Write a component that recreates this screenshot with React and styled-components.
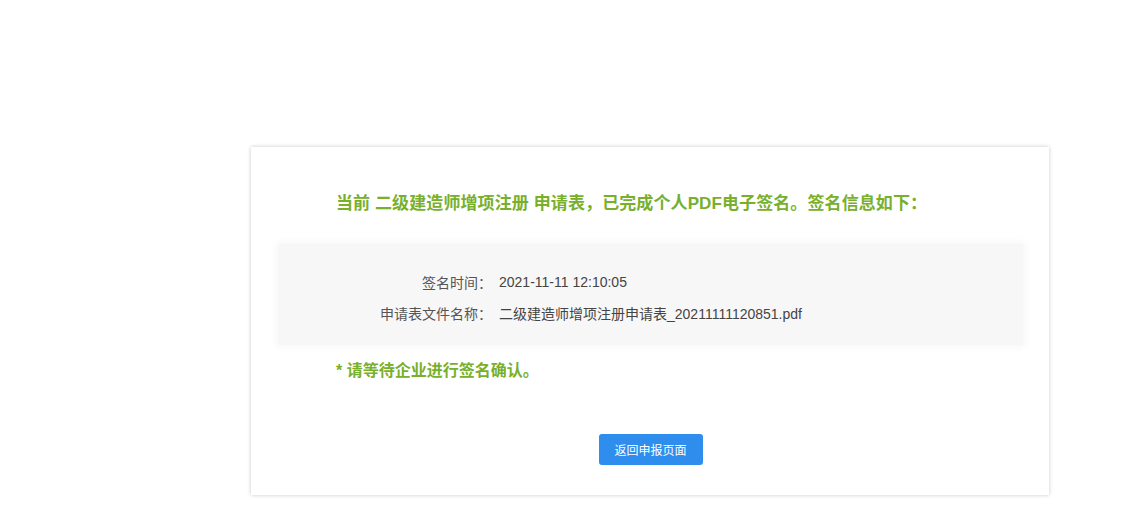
import React from 'react';
import styled, { createGlobalStyle } from 'styled-components';

const GlobalStyle = createGlobalStyle`
  html, body {
    margin: 0;
    padding: 0;
    background: #ffffff;
    font-family: "Liberation Sans", "Noto Sans CJK SC", sans-serif;
  }
`;

const Page = styled.div`
  width: 1143px;
  height: 525px;
  box-sizing: border-box;
  padding: 147px 0 0 251px;
`;

const Card = styled.div`
  width: 798px;
  box-sizing: border-box;
  background: #fff;
  box-shadow: 0 0 4px rgba(0, 0, 0, 0.22);
  padding: 45px 26px 30px 27px;
  display: flex;
  flex-direction: column;
`;

const Title = styled.h2`
  margin: 0 0 28px 58px;
  font-size: 17px;
  line-height: 24px;
  font-weight: bold;
  color: #78b02c;
  letter-spacing: 0.1px;
`;

const InfoBox = styled.div`
  background: #f7f7f7;
  box-shadow: 0 0 8px 2px #f7f7f7;
  padding: 22px 0 17px;
  display: flex;
  flex-direction: column;
`;

const Row = styled.div`
  display: flex;
  align-items: center;
  height: 31px;
  font-size: 14px;
`;

const Label = styled.span`
  width: 214px;
  margin-right: 7px;
  text-align: right;
  color: #555;
`;

const Value = styled.span`
  color: #444;
`;

const Note = styled.p`
  margin: 14px 0 0 58px;
  font-size: 16px;
  line-height: 24px;
  font-weight: bold;
  color: #78b02c;
`;

const Actions = styled.div`
  display: flex;
  justify-content: center;
  margin-top: 51px;
`;

const Button = styled.button`
  width: 104px;
  height: 31px;
  border: 0;
  border-radius: 3px;
  background: #2e8ded;
  color: #fff;
  font-family: inherit;
  font-size: 12px;
  cursor: pointer;
`;

const rows = [
  { label: '签名时间：', value: '2021-11-11 12:10:05' },
  { label: '申请表文件名称：', value: '二级建造师增项注册申请表_20211111120851.pdf' },
];

export default function App() {
  return (
    <>
      <GlobalStyle />
      <Page>
        <Card>
          <Title>当前 二级建造师增项注册 申请表，已完成个人PDF电子签名。签名信息如下：</Title>
          <InfoBox>
            {rows.map((r) => (
              <Row key={r.label}>
                <Label>{r.label}</Label>
                <Value>{r.value}</Value>
              </Row>
            ))}
          </InfoBox>
          <Note>* 请等待企业进行签名确认。</Note>
          <Actions>
            <Button type="button">返回申报页面</Button>
          </Actions>
        </Card>
      </Page>
    </>
  );
}
